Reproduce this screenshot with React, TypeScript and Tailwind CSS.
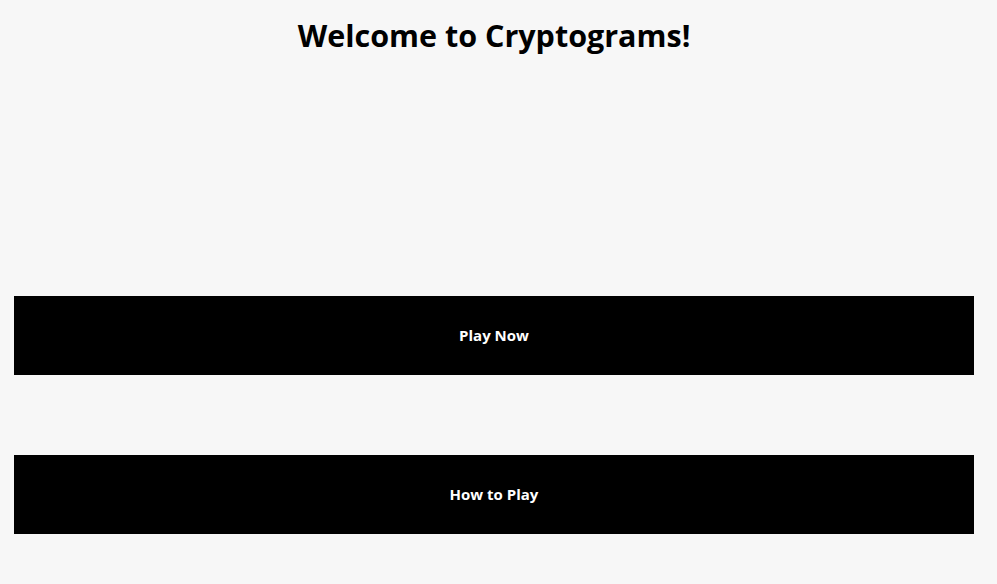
import React from 'react';

const App: React.FC = () => {
    return (
        <div className="min-h-screen w-full bg-[#f7f7f7] text-black" style={{ fontFamily: '"Open Sans", "Noto Sans", sans-serif' }}>
            <div className="w-[988px] px-[14px]">
                <h1 className="pt-[16px] text-center text-[30.5px] leading-[38px] font-bold">Welcome to Cryptograms!</h1>
                <div className="mt-[242px] flex flex-col gap-[80px]">
                    <button className="h-[79px] w-full bg-black text-[15px] font-bold text-white">Play Now</button>
                    <button className="h-[79px] w-full bg-black text-[15px] font-bold text-white">How to Play</button>
                </div>
            </div>
        </div>
    );
};

export default App;
